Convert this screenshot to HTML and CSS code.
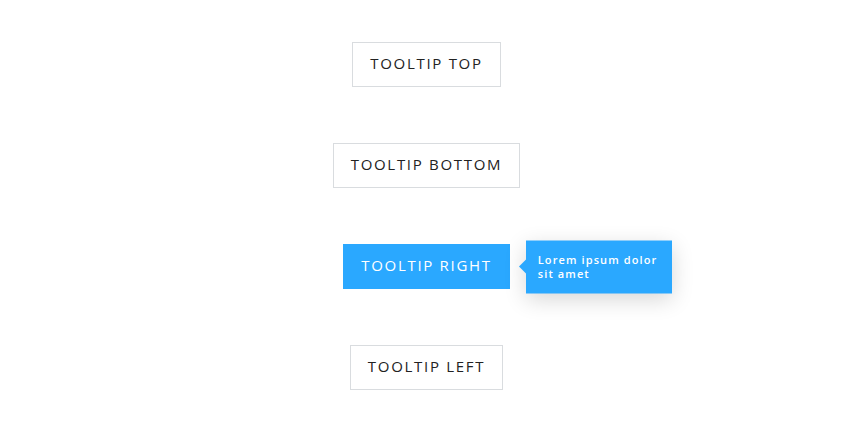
FILE: index.html
```html
<!DOCTYPE html>
<html lang="en">
<head>
    <meta charset="UTF-8" />
    <meta name="viewport" content="width=device-width, initial-scale=1" />
    <title>Tooltips</title>
    <link rel="stylesheet" href="styles.css">
</head>
<body>
    <div class="demo">
        <button class="tip-btn">Tooltip top</button>
        <button class="tip-btn">Tooltip bottom</button>
        <button class="tip-btn active">
            Tooltip right
            <span class="tooltip right">Lorem ipsum dolor sit amet</span>
        </button>
        <button class="tip-btn">Tooltip left</button>
    </div>
</body>
</html>
```

FILE: styles.css
```css
body {
    margin: 0;
    font-family: "Open Sans", "Noto Sans", sans-serif;
    background: #fff;
}
.demo {
    width: 853px;
    padding-top: 42px;
    display: flex;
    flex-direction: column;
    align-items: center;
    gap: 56px;
}
.tip-btn {
    position: relative;
    height: 45px;
    padding: 0 17px 3px;
    background: #fff;
    border: 1px solid #d9dcdf;
    color: #222;
    font-family: inherit;
    font-size: 15px;
    letter-spacing: 1.7px;
    text-transform: uppercase;
    cursor: pointer;
}
.tip-btn.active {
    background: #2aa8ff;
    border-color: #2aa8ff;
    color: #fff;
}
.tooltip {
    position: absolute;
    left: calc(100% + 17px);
    top: 50%;
    transform: translateY(-50%);
    width: 146px;
    box-sizing: border-box;
    padding: 12px 12px 13px;
    background: #2aa8ff;
    color: #fff;
    font-size: 11px;
    font-weight: 600;
    line-height: 14px;
    letter-spacing: 1.1px;
    text-transform: none;
    text-align: left;
    box-shadow: 0 6px 22px rgba(0, 0, 0, 0.16);
}
.tooltip.right::before {
    content: "";
    position: absolute;
    left: -7px;
    top: 50%;
    margin-top: -7px;
    border: 7px solid transparent;
    border-left: 0;
    border-right-color: #2aa8ff;
}
```
